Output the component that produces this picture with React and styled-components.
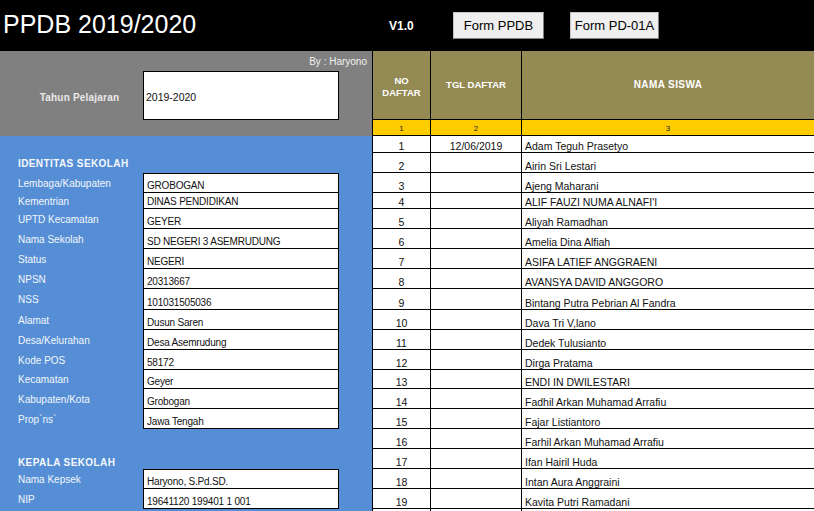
import React from 'react';
import styled, { createGlobalStyle } from 'styled-components';

const GlobalStyle = createGlobalStyle`
  html, body {
    margin: 0;
    padding: 0;
    background: #fff;
  }
  body {
    font-family: "Liberation Sans", Arial, sans-serif;
    overflow: hidden;
  }
`;

// excel row heights, shared by the form on the left and the student list
const ROW_HEIGHTS = [17, 20, 20, 16, 20, 20, 20, 20, 21, 20, 20, 20, 19, 20, 20, 20, 20, 20, 20, 20];
const rowTemplate = ROW_HEIGHTS.map((h) => `${h}px`).join(' ');

const schoolRows = [
  { type: 'blank' },
  { type: 'section', text: 'IDENTITAS SEKOLAH' },
  { label: 'Lembaga/Kabupaten', value: 'GROBOGAN', first: true },
  { label: 'Kementrian', value: 'DINAS PENDIDIKAN' },
  { label: 'UPTD Kecamatan', value: 'GEYER' },
  { label: 'Nama Sekolah', value: 'SD NEGERI 3 ASEMRUDUNG' },
  { label: 'Status', value: 'NEGERI' },
  { label: 'NPSN', value: '20313667' },
  { label: 'NSS', value: '101031505036' },
  { label: 'Alamat', value: 'Dusun Saren' },
  { label: 'Desa/Kelurahan', value: 'Desa Asemrudung' },
  { label: 'Kode POS', value: '58172' },
  { label: 'Kecamatan', value: 'Geyer' },
  { label: 'Kabupaten/Kota', value: 'Grobogan' },
  { label: 'Prop`ns`', value: 'Jawa Tengah' },
  { type: 'blank' },
  { type: 'section', text: 'KEPALA SEKOLAH', low: true },
  { label: 'Nama Kepsek', value: 'Haryono, S.Pd.SD.', first: true },
  { label: 'NIP', value: '19641120 199401 1 001' },
  { type: 'blank' },
];

const students = [
  ['Adam Teguh Prasetyo', '12/06/2019'],
  ['Airin Sri Lestari'],
  ['Ajeng Maharani'],
  ["ALIF FAUZI NUMA ALNAFI'I"],
  ['Aliyah Ramadhan'],
  ['Amelia Dina Alfiah'],
  ['ASIFA LATIEF ANGGRAENI'],
  ['AVANSYA DAVID ANGGORO'],
  ['Bintang Putra Pebrian Al Fandra'],
  ['Dava Tri V,lano'],
  ['Dedek Tulusianto'],
  ['Dirga Pratama'],
  ['ENDI IN DWILESTARI'],
  ['Fadhil Arkan Muhamad Arrafiu'],
  ['Fajar Listiantoro'],
  ['Farhil Arkan Muhamad Arrafiu'],
  ['Ifan Hairil Huda'],
  ['Intan Aura Anggraini'],
  ['Kavita Putri Ramadani'],
  [''],
];

const Page = styled.div`
  width: 814px;
  height: 511px;
  overflow: hidden;
  display: flex;
  flex-direction: column;
`;

const TopBar = styled.header`
  height: 51px;
  flex-shrink: 0;
  background: #000;
  display: grid;
  grid-template-columns: 389px 64px 117px 89px;
  align-items: center;
`;

const Title = styled.h1`
  margin: 0;
  padding-left: 3px;
  font-size: 25px;
  font-weight: normal;
  color: #fff;
  line-height: 1;
  padding-bottom: 2px;
`;

const Version = styled.span`
  font-size: 12px;
  font-weight: bold;
  color: #fff;
`;

const FormButton = styled.button`
  width: ${(p) => p.$w}px;
  height: 27px;
  padding: 0;
  background: #efefef;
  border: 1px solid #c4c4c4;
  border-right-color: #808080;
  border-bottom-color: #808080;
  font-family: "Liberation Sans", Arial, sans-serif;
  font-size: 13px;
  color: #000;
`;

const Body = styled.div`
  flex: 1;
  display: flex;
  min-height: 0;
`;

const LeftPanel = styled.div`
  width: 372px;
  flex-shrink: 0;
  display: flex;
  flex-direction: column;
`;

const YearBlock = styled.div`
  height: 85px;
  background: #808080;
  display: grid;
  grid-template-columns: 143px 196px 33px;
  grid-template-rows: 20px 49px 16px;
`;

const ByLine = styled.div`
  grid-column: 1 / -1;
  align-self: center;
  text-align: right;
  padding-right: 5px;
  font-size: 10px;
  color: #f2f2f2;
`;

const YearLabel = styled.div`
  align-self: center;
  text-align: center;
  padding-left: 16px;
  padding-top: 3px;
  font-size: 10px;
  font-weight: bold;
  letter-spacing: 0.2px;
  color: #e9e9e9;
`;

const YearBox = styled.div`
  background: #fff;
  border: 1px solid #000;
  display: flex;
  align-items: center;
  padding: 2px 0 0 2px;
  font-size: 10.5px;
  color: #111;
`;

const SchoolBlock = styled.div`
  flex: 1;
  background: #558ed5;
  display: grid;
  grid-template-columns: 143px 196px;
  grid-template-rows: ${rowTemplate};
  align-content: start;
`;

const Spacer = styled.div`
  grid-column: 1 / -1;
`;

const SectionTitle = styled.div`
  grid-column: 1 / -1;
  align-self: ${(p) => (p.$low ? 'end' : 'center')};
  padding-left: 18px;
  padding-bottom: ${(p) => (p.$low ? '1px' : '0')};
  font-size: 10px;
  font-weight: bold;
  letter-spacing: 0.4px;
  color: #f6f8fc;
`;

const FieldLabel = styled.div`
  align-self: center;
  padding-left: 18px;
  font-size: 10px;
  color: #f3f6fb;
  white-space: nowrap;
`;

const FieldValue = styled.div`
  background: #fff;
  border: 1px solid #000;
  border-top-width: ${(p) => (p.$first ? '1px' : '0')};
  display: flex;
  align-items: flex-end;
  padding-left: 3px;
  font-size: 10px;
  line-height: 12px;
  letter-spacing: -0.2px;
  color: #111;
  white-space: nowrap;
  overflow: hidden;
`;

const Sheet = styled.div`
  flex: 1;
  border-left: 1px solid #000;
  display: grid;
  grid-template-columns: 58px 91px 1fr;
  grid-template-rows: 69px 16px ${rowTemplate};
  align-content: start;
`;

const Cell = styled.div`
  border-bottom: 1px solid #000;
  border-right: ${(p) => (p.$last ? 'none' : '1px solid #000')};
  display: flex;
  min-width: 0;
  overflow: hidden;
  white-space: nowrap;
`;

const HeadCell = styled(Cell)`
  background: #948a54;
  align-items: center;
  justify-content: center;
  text-align: center;
  font-size: ${(p) => (p.$wide ? '10px' : '9.5px')};
  font-weight: bold;
  letter-spacing: ${(p) => (p.$wide ? '0.4px' : '0')};
  line-height: 12px;
  color: #fff;
  white-space: normal;
  padding-top: ${(p) => (p.$tall ? '3px' : '0')};
  padding-bottom: ${(p) => (p.$tall ? '0' : '1px')};
`;

const IndexCell = styled(Cell)`
  background: #ffcc00;
  align-items: flex-end;
  justify-content: center;
  font-size: 8px;
  line-height: 10px;
  padding-bottom: 1px;
  color: #222;
`;

const DataCell = styled(Cell)`
  align-items: flex-end;
  justify-content: ${(p) => (p.$left ? 'flex-start' : 'center')};
  padding-left: ${(p) => (p.$left ? '3px' : '0')};
  font-size: 10.5px;
  line-height: 12px;
  color: #111;
`;

export default function App() {
  return (
    <Page>
      <GlobalStyle />
      <TopBar>
        <Title>PPDB 2019/2020</Title>
        <Version>V1.0</Version>
        <div>
          <FormButton $w={91}>Form PPDB</FormButton>
        </div>
        <div>
          <FormButton $w={89}>Form PD-01A</FormButton>
        </div>
      </TopBar>

      <Body>
        <LeftPanel>
          <YearBlock>
            <ByLine>By : Haryono</ByLine>
            <YearLabel>Tahun Pelajaran</YearLabel>
            <YearBox>2019-2020</YearBox>
          </YearBlock>

          <SchoolBlock>
            {schoolRows.map((row, i) => {
              if (row.type === 'blank') return <Spacer key={i} />;
              if (row.type === 'section') {
                return (
                  <SectionTitle key={i} $low={row.low}>
                    {row.text}
                  </SectionTitle>
                );
              }
              return (
                <React.Fragment key={i}>
                  <FieldLabel>{row.label}</FieldLabel>
                  <FieldValue $first={row.first}>{row.value}</FieldValue>
                </React.Fragment>
              );
            })}
          </SchoolBlock>
        </LeftPanel>

        <Sheet>
          <HeadCell $tall>
            NO
            <br />
            DAFTAR
          </HeadCell>
          <HeadCell>TGL DAFTAR</HeadCell>
          <HeadCell $wide $last>NAMA SISWA</HeadCell>

          <IndexCell>1</IndexCell>
          <IndexCell>2</IndexCell>
          <IndexCell $last>3</IndexCell>

          {students.map(([name, date], i) => (
            <React.Fragment key={i}>
              <DataCell>{name ? i + 1 : ''}</DataCell>
              <DataCell>{date}</DataCell>
              <DataCell $left $last>{name}</DataCell>
            </React.Fragment>
          ))}
        </Sheet>
      </Body>
    </Page>
  );
}
